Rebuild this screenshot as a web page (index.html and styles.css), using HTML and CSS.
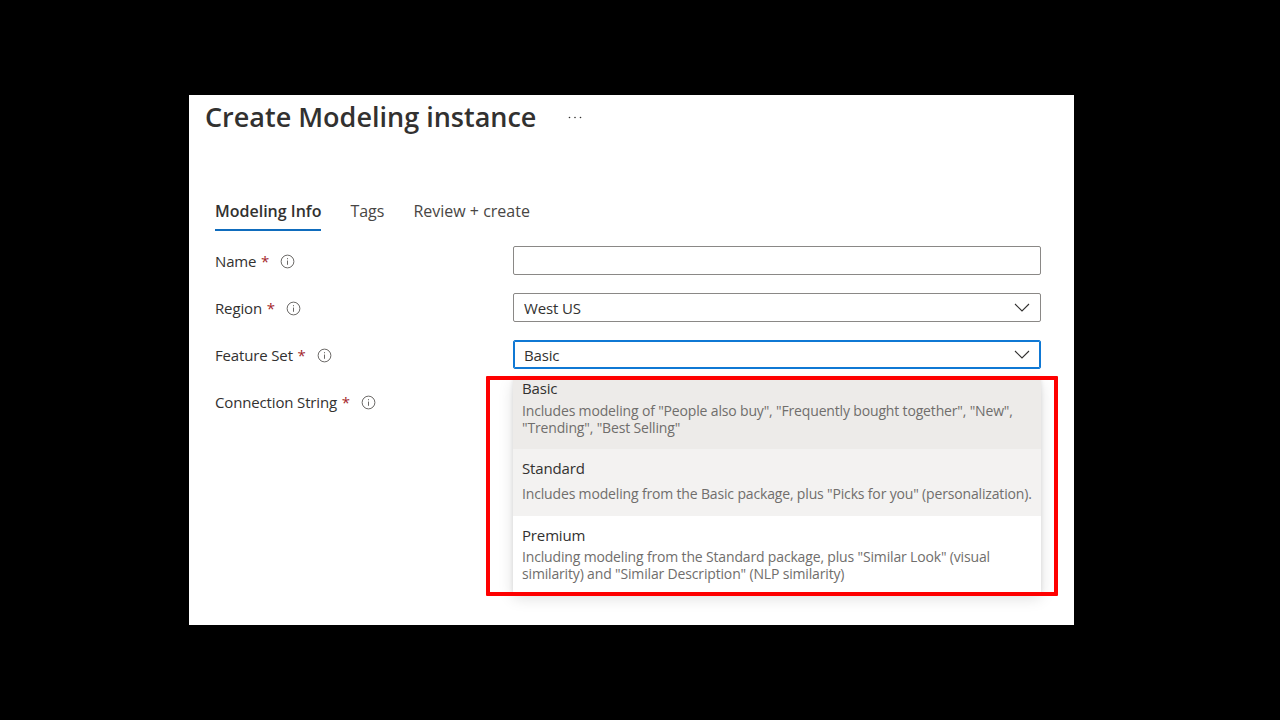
FILE: index.html
```html
<html>
<head>
  <title>Create Modeling instance</title>
  <link rel="stylesheet" href="styles.css">
</head>
<body>
  <div class="panel">
    <div class="header">
      <h1>Create Modeling instance</h1>
      <svg class="more" viewBox="0 0 14 3"><circle cx="1.5" cy="1.5" r="0.8"/><circle cx="7" cy="1.5" r="0.8"/><circle cx="12.5" cy="1.5" r="0.8"/></svg>
    </div>
    <div class="tabs">
      <span class="tab active">Modeling Info</span>
      <span class="tab">Tags</span>
      <span class="tab">Review + create</span>
    </div>
    <div class="form">
      <div class="row">
        <label>Name <b>*</b><svg class="info" viewBox="0 0 16 16"><circle cx="8" cy="8" r="6.8"/><path d="M8 7v4.5M8 4.4v1.2"/></svg></label>
        <div class="field"></div>
      </div>
      <div class="row">
        <label>Region <b>*</b><svg class="info" viewBox="0 0 16 16"><circle cx="8" cy="8" r="6.8"/><path d="M8 7v4.5M8 4.4v1.2"/></svg></label>
        <div class="field">West US<svg class="chevron" viewBox="0 0 16 9"><path d="M1 1l7 7 7-7"/></svg></div>
      </div>
      <div class="row">
        <label>Feature Set <b>*</b><svg class="info" viewBox="0 0 16 16"><circle cx="8" cy="8" r="6.8"/><path d="M8 7v4.5M8 4.4v1.2"/></svg></label>
        <div class="field focused">Basic<svg class="chevron" viewBox="0 0 16 9"><path d="M1 1l7 7 7-7"/></svg></div>
      </div>
      <div class="row">
        <label>Connection String <b>*</b><svg class="info" viewBox="0 0 16 16"><circle cx="8" cy="8" r="6.8"/><path d="M8 7v4.5M8 4.4v1.2"/></svg></label>
      </div>
    </div>
    <div class="dropdown">
      <div class="option selected first">
        <div class="opt-name">Basic</div>
        <div class="opt-desc">Includes modeling of "People also buy", "Frequently bought together", "New", "Trending", "Best Selling"</div>
      </div>
      <div class="option hovered">
        <div class="opt-name">Standard</div>
        <div class="opt-desc">Includes modeling from the Basic package, plus "Picks for you" (personalization).</div>
      </div>
      <div class="option last">
        <div class="opt-name">Premium</div>
        <div class="opt-desc">Including modeling from the Standard package, plus "Similar Look" (visual similarity) and "Similar Description" (NLP similarity)</div>
      </div>
    </div>
    <div class="callout"></div>
  </div>
</body>
</html>
```

FILE: styles.css
```css
body {
  margin: 0;
  background: #000;
  font-family: "Open Sans", sans-serif;
  color: #323130;
  overflow: hidden;
}

.panel {
  position: relative;
  box-sizing: border-box;
  width: 885px;
  height: 530px;
  margin: 95px 0 0 189px;
  padding: 0 33px 0 16px;
  background: #fff;
}

.header {
  display: flex;
  align-items: center;
  height: 43px;
}

h1 {
  margin: 0;
  font-size: 27px;
  font-weight: 600;
  line-height: 43px;
  width: 363px;
}

.more {
  width: 14px;
  height: 3px;
  margin-top: 1px;
  fill: #323130;
}

.tabs {
  display: flex;
  gap: 29px;
  margin: 56px 0 0 10px;
  font-size: 16px;
}

.tab {
  height: 37px;
  line-height: 34px;
  box-sizing: border-box;
  color: #484644;
}

.active {
  color: #323130;
  font-weight: 600;
  border-bottom: 2px solid #0f6cbd;
}

.form {
  margin: 15px 0 0 10px;
}

.row {
  display: flex;
  align-items: center;
  height: 29px;
  margin-bottom: 18px;
}

label {
  display: flex;
  align-items: center;
  width: 298px;
  padding-top: 1px;
  font-size: 15px;
  letter-spacing: -0.15px;
  white-space: pre;
}

label b {
  color: #a4262c;
  font-weight: 500;
  margin-left: 1px;
}

.info {
  width: 15px;
  height: 15px;
  margin-left: 11px;
  fill: none;
  stroke: #605e5c;
  stroke-width: 1;
}

.field {
  flex: none;
  display: flex;
  align-items: center;
  justify-content: space-between;
  box-sizing: border-box;
  width: 528px;
  height: 29px;
  padding: 0 10px;
  border: 1px solid #8a8886;
  border-radius: 2px;
  font-size: 15px;
  letter-spacing: -0.15px;
}

.focused {
  border: 1px solid #0f78d4;
  box-shadow: inset 0 0 0 1px #0f78d4;
}

.chevron {
  width: 16px;
  height: 9px;
  fill: none;
  stroke: #323130;
  stroke-width: 1.1;
}

.dropdown {
  position: absolute;
  left: 324px;
  top: 283px;
  width: 528px;
  background: #fff;
  box-shadow: 0 6px 14px rgba(0, 0, 0, 0.13), 0 1px 4px rgba(0, 0, 0, 0.1);
}

.option {
  box-sizing: border-box;
  padding: 0 9px;
}

.opt-name {
  font-size: 15px;
  letter-spacing: -0.15px;
}

.opt-desc {
  font-size: 14px;
  letter-spacing: -0.16px;
  line-height: 16.5px;
  color: #706e6c;
}

.selected {
  height: 71px;
  background: #edebe9;
}

.first .opt-name {
  line-height: 20px;
}

.first .opt-desc {
  margin-top: 5px;
}

.hovered {
  height: 67px;
  padding-top: 9px;
  background: #f3f2f1;
}

.hovered .opt-desc {
  margin-top: 8px;
}

.last {
  height: 76px;
  padding-top: 9px;
}

.last .opt-desc {
  margin-top: 4px;
}

.callout {
  position: absolute;
  left: 297px;
  top: 281px;
  width: 572px;
  height: 220px;
  box-sizing: border-box;
  border: 4px solid #fe0000;
  border-radius: 1px;
}
```
